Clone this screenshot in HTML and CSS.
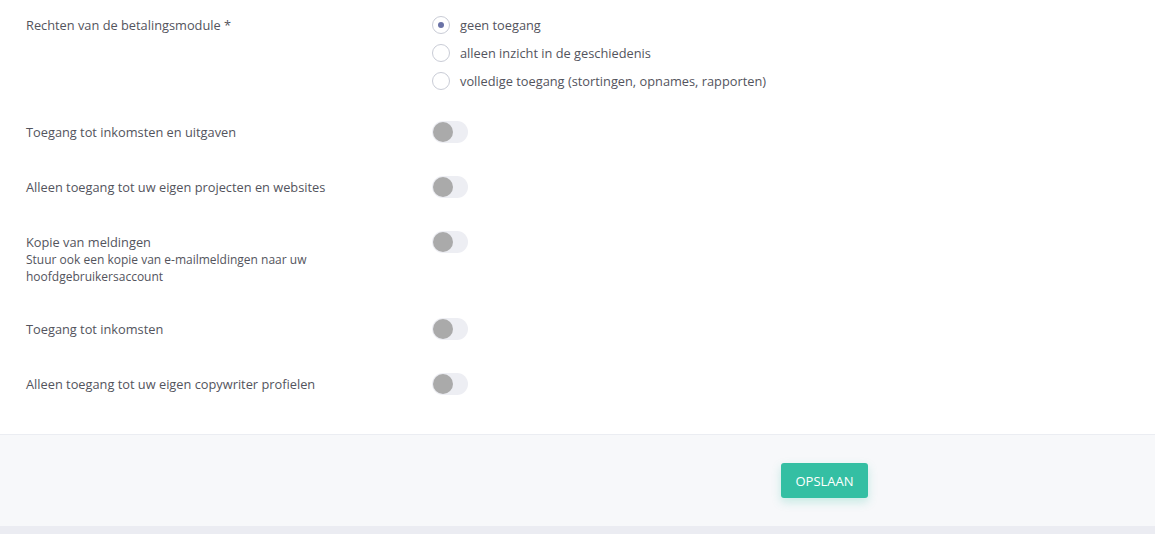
FILE: index.html
```html
<!DOCTYPE html>
<html lang="nl">
<head>
<meta charset="utf-8">
<title>Rechten</title>
<link rel="stylesheet" href="styles.css">
</head>
<body>
<div class="page">
  <form class="form">
    <div class="form-body">
      <div class="row row--radios">
        <div class="label">Rechten van de betalingsmodule *</div>
        <div class="control">
          <div class="radio-list">
            <label class="radio"><span class="radio-mark is-checked"></span><span>geen toegang</span></label>
            <label class="radio"><span class="radio-mark"></span><span>alleen inzicht in de geschiedenis</span></label>
            <label class="radio"><span class="radio-mark"></span><span>volledige toegang (stortingen, opnames, rapporten)</span></label>
          </div>
        </div>
      </div>
      <div class="row">
        <div class="label">Toegang tot inkomsten en uitgaven</div>
        <div class="control"><span class="switch"><span class="knob"></span></span></div>
      </div>
      <div class="row">
        <div class="label">Alleen toegang tot uw eigen projecten en websites</div>
        <div class="control"><span class="switch"><span class="knob"></span></span></div>
      </div>
      <div class="row">
        <div class="label">Kopie van meldingen
          <div class="help">Stuur ook een kopie van e-mailmeldingen naar uw hoofdgebruikersaccount</div>
        </div>
        <div class="control"><span class="switch"><span class="knob"></span></span></div>
      </div>
      <div class="row">
        <div class="label">Toegang tot inkomsten</div>
        <div class="control"><span class="switch"><span class="knob"></span></span></div>
      </div>
      <div class="row">
        <div class="label">Alleen toegang tot uw eigen copywriter profielen</div>
        <div class="control"><span class="switch"><span class="knob"></span></span></div>
      </div>
    </div>
    <div class="form-footer">
      <button type="button" class="btn-save">OPSLAAN</button>
    </div>
  </form>
  <div class="page-bottom"></div>
</div>
</body>
</html>
```
FILE: styles.css
```css
* { box-sizing: border-box; }
html, body { margin: 0; padding: 0; background: #ffffff; }
body {
  font-family: "Open Sans", "Liberation Sans", sans-serif;
  font-size: 12.8px;
  color: #53545d;
}
.form-body {
  padding: 14px 26px 39px 26px;
}
.row {
  display: flex;
  align-items: flex-start;
  margin-bottom: 33px;
}
.row:last-child { margin-bottom: 0; }
.row--radios { margin-bottom: 31px; }
.label {
  width: 406px;
  flex: none;
  padding-top: 2px;
  padding-right: 26px;
  line-height: 18px;
}
.row--radios .label { padding-top: 1px; line-height: 20px; }
.help {
  font-size: 12px;
  line-height: 17px;
}
.control { flex: 1; }
.radio-list {
  display: flex;
  flex-direction: column;
  gap: 10px;
  margin-top: 2px;
}
.radio {
  display: flex;
  align-items: center;
  height: 18px;
  gap: 10px;
  line-height: 18px;
}
.radio-mark {
  width: 18px;
  height: 18px;
  border-radius: 50%;
  border: 1px solid #c9ccd6;
  background: #fff;
  position: relative;
  flex: none;
}
.radio-mark.is-checked::after {
  content: "";
  position: absolute;
  left: 5px;
  top: 5px;
  width: 6px;
  height: 6px;
  border-radius: 50%;
  background: #6a72a6;
}
.switch {
  display: block;
  width: 36px;
  height: 22px;
  border-radius: 11px;
  background: #edeef3;
  position: relative;
}
.knob {
  position: absolute;
  left: 1px;
  top: 1px;
  width: 20px;
  height: 20px;
  border-radius: 50%;
  background: #aaaaaa;
}
.form-footer {
  border-top: 1px solid #ebedf2;
  background: #f7f8fa;
  padding: 28px 0 28px 781px;
}
.btn-save {
  display: block;
  height: 35px;
  width: 87px;
  padding: 0;
  border: none;
  border-radius: 3px;
  background: #34bfa3;
  color: #ffffff;
  font-family: "Open Sans", "Liberation Sans", sans-serif;
  font-size: 13px;
  box-shadow: 0 4px 10px rgba(52, 191, 163, 0.25);
}
.page-bottom {
  height: 8px;
  background: #ebecf2;
}
```
